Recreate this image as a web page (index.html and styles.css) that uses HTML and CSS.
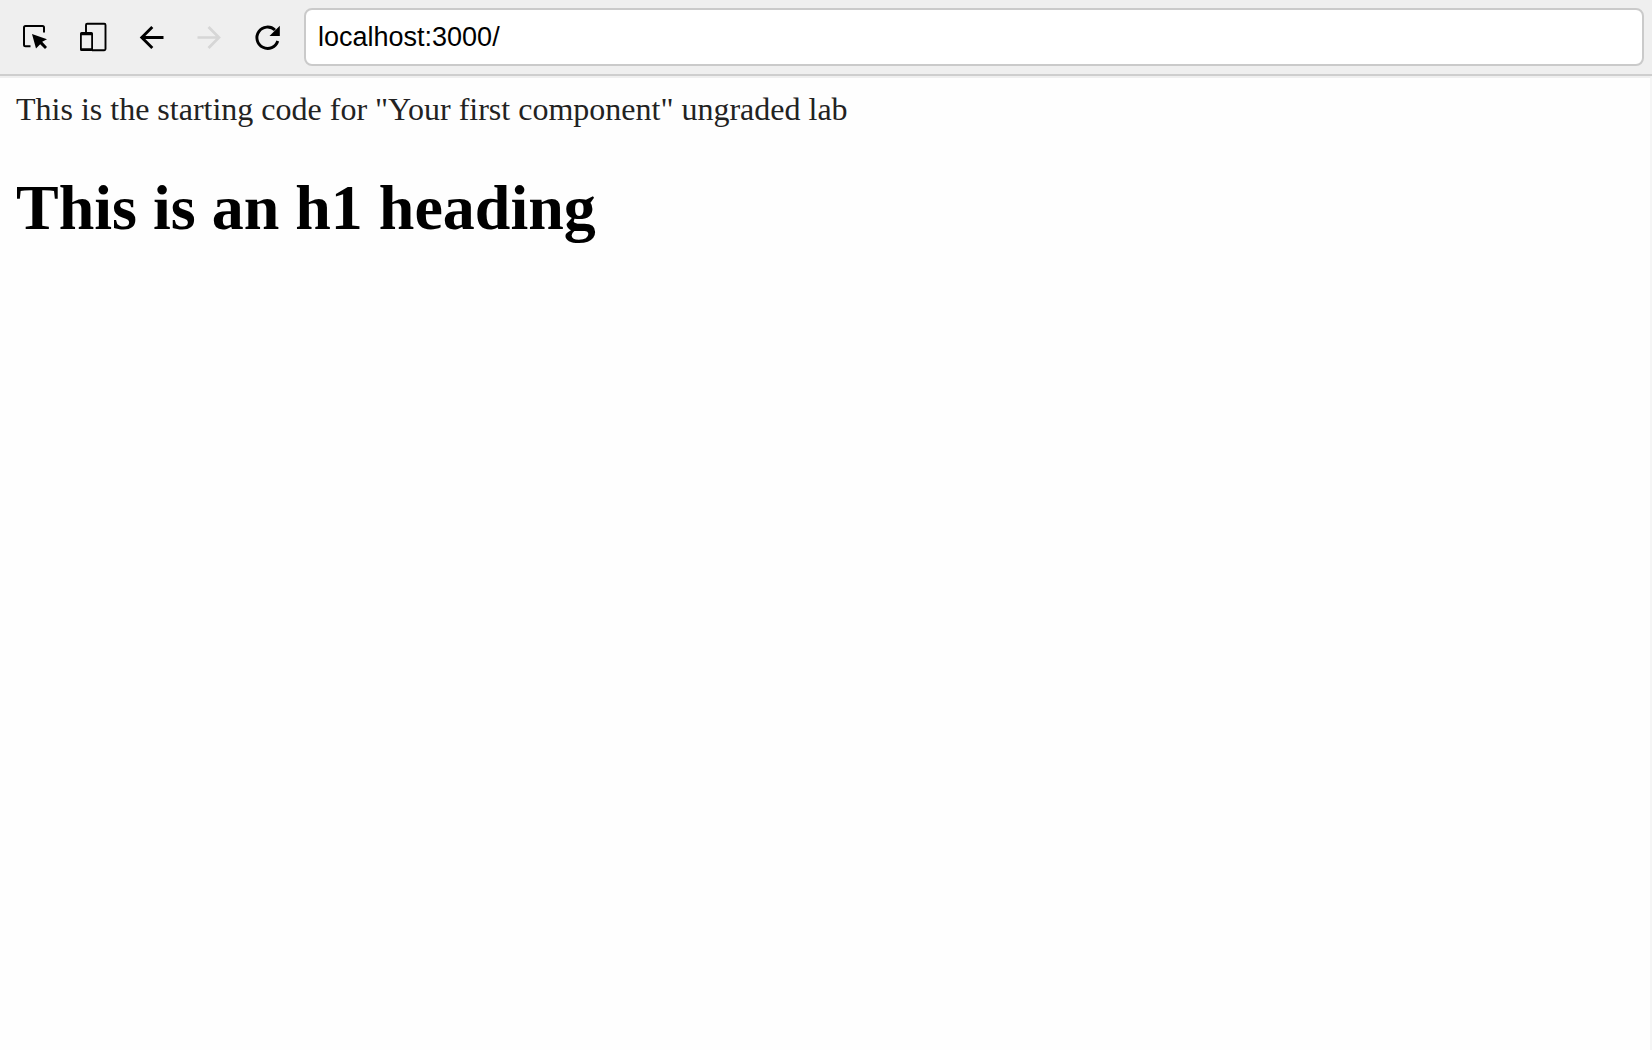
FILE: index.html
```html
<!DOCTYPE html>
<html lang="en">
<head>
<meta charset="utf-8">
<title>Browser preview</title>
<link rel="stylesheet" href="styles.css">
</head>
<body>
<header class="toolbar">
  <button class="tool" type="button" aria-label="Inspect element">
    <svg class="icon" viewBox="0 0 32 32">
      <path d="M11.500 25.300H6.500Q5 25.300 5 23.800V6.500Q5 5 6.500 5H23.500Q25 5 25 6.500V11.500" fill="none" stroke="currentColor" stroke-width="2"/>
      <path d="M13 13 28 18.200 23.200 20.800 28 26 26 28 21.200 23.300 17 27.500z" fill="currentColor"/>
    </svg>
  </button>
  <button class="tool" type="button" aria-label="Toggle device view">
    <svg class="icon" viewBox="0 0 32 32">
      <path d="M9 11V4Q9 2.800 10.200 2.800H27.300Q28.500 2.800 28.500 4V28Q28.500 29.200 27.300 29.200H15" fill="none" stroke="currentColor" stroke-width="1.900"/>
      <path fill-rule="evenodd" d="M4.500 11H14.500Q16 11 16 12.500V28.500Q16 30 14.500 30H4.500Q3 30 3 28.500V12.500Q3 11 4.500 11zM4.800 14.200V27.200H14.200V14.200z" fill="currentColor"/>
    </svg>
  </button>
  <button class="tool" type="button" aria-label="Back">
    <svg class="icon" viewBox="0 0 32 32"><path d="M28.500 16.500H7M17.300 6 6.800 16.500 17.300 27" fill="none" stroke="currentColor" stroke-width="2.900"/></svg>
  </button>
  <button class="tool" type="button" aria-label="Forward" disabled>
    <svg class="icon" viewBox="0 0 32 32"><path d="M4.500 16.500H26M15.500 6 26 16.500 15.500 27" fill="none" stroke="currentColor" stroke-width="2.700"/></svg>
  </button>
  <button class="tool" type="button" aria-label="Reload">
    <svg class="icon" viewBox="0 0 32 32">
      <path d="M26.800 20A10.700 10.700 0 1 1 24 9" fill="none" stroke="currentColor" stroke-width="2.900"/>
      <path d="M28.800 4.700V15H18.500z" fill="currentColor"/>
    </svg>
  </button>
  <input class="address" type="text" aria-label="Address" value="localhost:3000/">
</header>
<main class="page">
  <div>This is the starting code for "Your first component" ungraded lab</div>
  <h1 class="heading">This is an h1 heading</h1>
</main>
</body>
</html>
```
FILE: styles.css
```css
* {
  box-sizing: border-box;
}

body {
  display: flex;
  flex-direction: column;
  min-height: 100vh;
  margin: 0;
  background: #fefefe;
}

.toolbar {
  display: flex;
  align-items: center;
  padding: 8px 8px 8px 6px;
  background: #efefef;
  border-bottom: 2px solid #cecece;
}

.tool {
  display: flex;
  flex: none;
  align-items: center;
  justify-content: center;
  width: 58px;
  height: 58px;
  padding: 0;
  border: 0;
  background: none;
  color: #000;
}

.tool:disabled {
  color: #d6d6d6;
}

.icon {
  width: 32px;
  height: 32px;
}

.address {
  flex: 1;
  min-width: 0;
  height: 58px;
  margin-left: 8px;
  padding: 0 12px;
  border: 2px solid #cacaca;
  border-radius: 8px;
  background: #fff;
  color: #000;
  font: 27px "Liberation Sans", Arial, sans-serif;
}

.page {
  flex: 1;
  padding: 13px 16px 16px;
  border-top: 2px solid #efefef;
  border-right: 2px solid #f5f5f5;
  color: #222;
  font: 32px "Liberation Serif", "Times New Roman", serif;
}

.heading {
  margin: 43px 0;
  color: #000;
  font-size: 64px;
}
```
